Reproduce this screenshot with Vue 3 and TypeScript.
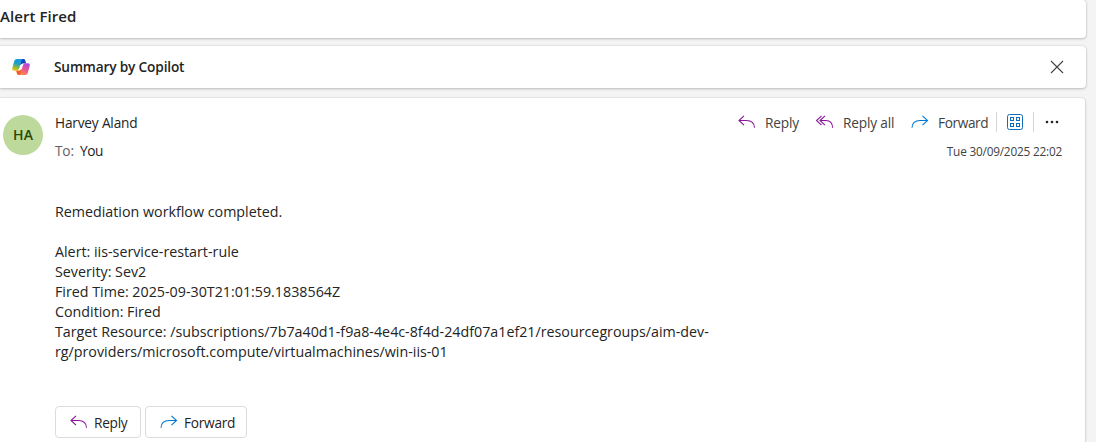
<script setup lang="ts">
const lines: string[] = [
  'Remediation workflow completed.',
  '\u00a0',
  'Alert: iis-service-restart-rule',
  'Severity: Sev2',
  'Fired Time: 2025-09-30T21:01:59.1838564Z',
  'Condition: Fired',
  'Target Resource: /subscriptions/7b7a40d1-f9a8-4e4c-8f4d-24df07a1ef21/resourcegroups/aim-dev-',
  'rg/providers/microsoft.compute/virtualmachines/win-iis-01',
]
</script>

<template>
  <main class="page">
    <section class="card subject"><h1>Alert Fired</h1></section>

    <section class="card copilot">
      <svg class="logo" viewBox="0 0 18 16" width="18" height="16">
        <defs>
          <linearGradient id="cpLeft" x1="0.6" y1="0" x2="0.3" y2="1">
            <stop offset="0" stop-color="#1598ee" />
            <stop offset="0.4" stop-color="#1f9fc4" />
            <stop offset="0.7" stop-color="#85b84a" />
            <stop offset="1" stop-color="#f2c40c" />
          </linearGradient>
          <linearGradient id="cpRight" x1="0.7" y1="0" x2="0.3" y2="1">
            <stop offset="0" stop-color="#a54be8" />
            <stop offset="0.5" stop-color="#ea5593" />
            <stop offset="1" stop-color="#ff8a4c" />
          </linearGradient>
        </defs>
        <path d="M8.500 0h3c1 0 1.500.6 1.800 1.500l.9 2.900h-3.600L8 6z" fill="#1647b8" />
        <path d="M9.500 16H6.700c-1 0-1.500-.6-1.800-1.500L4 11.600h3.600L10 10z" fill="#f0602e" />
        <path d="M4.700 0h6.300c-.9.1-1.300.9-1.600 1.800L7.200 9.300c-.4 1.500-1.300 2.400-2.700 2.400H2.100C.5 11.700-.1 10.500.3 8.900l1.800-6.400C2.500 1 3.300 0 4.700 0z" fill="url(#cpLeft)" />
        <path d="M13.300 16H7c.9-.1 1.300-.9 1.600-1.800l2.200-7.500c.4-1.500 1.300-2.400 2.700-2.400h2.400c1.600 0 2.200 1.200 1.800 2.800l-1.800 6.400c-.4 1.500-1.200 2.500-2.600 2.500z" fill="url(#cpRight)" />
      </svg>
      <h2>Summary by Copilot</h2>
      <svg class="close" viewBox="0 0 14 14" width="14" height="14" fill="none" stroke="#424242" stroke-width="1.1">
        <path d="M1 1l12 12M13 1L1 13" />
      </svg>
    </section>

    <section class="card message">
      <div class="avatar">HA</div>
      <div class="content">
        <header class="head">
          <div class="who">
            <div class="name">Harvey Aland</div>
            <div class="to"><span class="to-label">To:</span><span class="you">You</span></div>
          </div>
          <div class="meta">
            <div class="actions">
              <svg viewBox="0 0 18 14" width="18" height="14" fill="none" stroke="#881798" stroke-width="1.1"><path d="M6 .8L1 5.500l5 4.700M1 5.500h7.500c4.600 0 7.800 2.500 8 7.200" /></svg>
              <span class="t-reply">Reply</span>
              <svg viewBox="0 0 18 14" width="18" height="14" fill="none" stroke="#881798" stroke-width="1.1"><path d="M5.500.8l-5 4.700 5 4.700M9 .8L4 5.500l5 4.700M4 5.500h6c3.800 0 6.400 2.500 6.600 7.200" /></svg>
              <span class="t-all">Reply all</span>
              <svg viewBox="0 0 18 14" width="18" height="14" fill="none" stroke="#0078d4" stroke-width="1.1"><path d="M11.500.8l5 4.700-5 4.700M16.500 5.500H9C4.400 5.500 1.200 8 1 12.700" /></svg>
              <span class="t-fwd">Forward</span>
              <i class="sep"></i>
              <svg class="apps" viewBox="0 0 16 16" width="16" height="16" fill="none" stroke="#0f6cbd" stroke-width="1">
                <rect x=".5" y=".5" width="15" height="15" rx="2" />
                <rect x="3.500" y="3.500" width="3" height="3" /><rect x="9.500" y="3.500" width="3" height="3" />
                <rect x="3.500" y="9.500" width="3" height="3" /><rect x="9.500" y="9.500" width="3" height="3" />
              </svg>
              <i class="sep"></i>
              <svg class="dots" viewBox="0 0 14 4" width="14" height="4" fill="#242424"><circle cx="2" cy="2" r="1.300" /><circle cx="7" cy="2" r="1.300" /><circle cx="12" cy="2" r="1.300" /></svg>
            </div>
            <time class="date">Tue 30/09/2025 22:02</time>
          </div>
        </header>
        <div class="body">
          <div v-for="(line, i) in lines" :key="i" class="line">{{ line }}</div>
        </div>
        <footer class="foot">
          <button class="btn b-reply">
            <svg viewBox="0 0 18 14" width="18" height="14" fill="none" stroke="#881798" stroke-width="1.1"><path d="M6 .8L1 5.500l5 4.700M1 5.500h7.500c4.600 0 7.800 2.500 8 7.200" /></svg>
            <span>Reply</span>
          </button>
          <button class="btn b-fwd">
            <svg viewBox="0 0 18 14" width="18" height="14" fill="none" stroke="#0078d4" stroke-width="1.1"><path d="M11.500.8l5 4.700-5 4.700M16.500 5.500H9C4.400 5.500 1.200 8 1 12.700" /></svg>
            <span>Forward</span>
          </button>
        </footer>
      </div>
    </section>
  </main>
</template>

<style>
body { margin: 0; overflow: hidden; }
</style>

<style scoped>
.page {
  height: 442px;
  overflow: hidden;
  background: #f4f4f4;
  font-family: "Open Sans", "Noto Sans", sans-serif;
  font-size: 13.7px;
  letter-spacing: -.19px;
  color: #242424;
  display: flex;
  flex-direction: column;
}
.page * { box-sizing: border-box; white-space: nowrap; }
.card {
  background: #fff;
  width: 1086px;
  flex: none;
  border-radius: 0 4px 4px 0;
  box-shadow: 0 0 2px rgba(0, 0, 0, .14), 0 1px 3px rgba(0, 0, 0, .2);
}
.subject { height: 38px; }
h1 { margin: 0; font-size: 15px; font-weight: 600; line-height: 20px; padding-top: 6px; letter-spacing: .06px; }
.copilot { height: 42px; margin-top: 8px; display: flex; align-items: center; padding: 0 22px 0 12px; }
h2 { margin: 0 auto 0 24px; font-size: 13.7px; font-weight: 600; line-height: 20px; padding-bottom: 1px; letter-spacing: -.17px; }
.message { height: 360px; width: 1085px; margin-top: 10px; display: flex; padding: 0 0 0 3px; }
.avatar {
  width: 40px; height: 40px; margin-top: 17px; border-radius: 50%; flex: none;
  background: #bdd99b; color: #294903; font-size: 14px; font-weight: 600;
  line-height: 40px; text-align: center; letter-spacing: 0;
}
.content { margin-left: 12px; flex: 1; }
.head { display: flex; justify-content: space-between; height: 104px; }
.who { padding-top: 15px; line-height: 20px; }
.to { margin-top: 8px; display: flex; }
.to-label { color: #616161; width: 25px; }
.you { letter-spacing: -.5px; }
.meta { display: flex; flex-direction: column; align-items: flex-end; padding-right: 23px; }
.actions { display: flex; align-items: center; height: 20px; margin-top: 14px; color: #424242; width: 324px; }
.actions > * { flex: none; }
.t-reply { width: 51px; margin-left: 9px; }
.t-all { width: 68px; margin-left: 9px; }
.t-fwd { width: 58px; margin-left: 9px; letter-spacing: -.4px; }
.sep { width: 1px; height: 20px; background: #d6d6d6; }
.apps { margin: 0 10px; }
.dots { margin-left: 11px; }
.date { font-size: 11.8px; line-height: 16px; margin-top: 11px; color: #424242; letter-spacing: -.2px; }
.line { height: 20px; line-height: 20px; font-size: 14.28px; letter-spacing: 0; }
.foot { display: flex; gap: 4px; margin-top: 44px; }
.btn {
  height: 32px; border: 1px solid #dcdcdc; border-radius: 4px; background: #fff;
  font: inherit; letter-spacing: -.28px; color: #242424; padding: 0 0 0 14px; display: flex; align-items: center; gap: 6px;
}
.b-reply { width: 86px; }
.b-fwd { width: 102px; }
</style>
